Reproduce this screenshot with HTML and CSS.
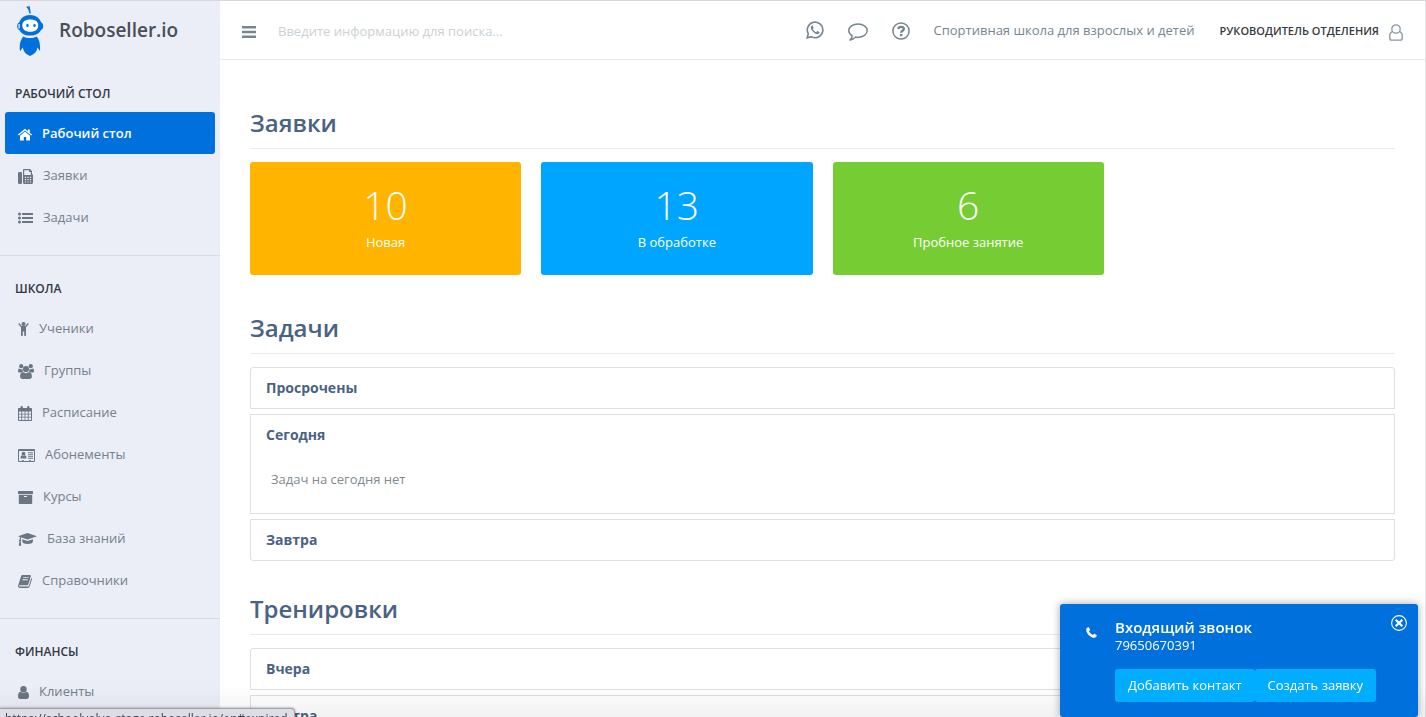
FILE: index.html
```html
<!DOCTYPE html>
<html lang="ru">
<head>
<meta charset="utf-8">
<title>Roboseller.io</title>
<link rel="stylesheet" href="styles.css">
</head>
<body>
<div class="app">
  <aside class="sidebar">
    <a class="brand" href="#">
      <svg class="brand-logo" width="28" height="50" viewBox="0 0 28 50" aria-hidden="true">
        <path fill="#0070dd" d="M9 .7 12.700.2 13.800 7.500 12.400 7.500C12 4.500 11 2.200 9 .7Z"/>
        <path fill="#0070dd" d="M13 9C7.500 9 3.600 12 2.200 16.500.8 16.700.2 18.300.2 20.200s.8 3.500 2.200 3.700C4 27 7.500 29.500 13 29.500S22.500 27 24 23.900c1.400-.2 2.200-1.800 2.200-3.700s-.6-3.500-2-3.700C22.800 12 18.500 9 13 9Z"/>
        <path fill="#fff" d="M13.300 13.500c-5.300 0-8 2.300-8 6s2.700 6.300 8 6.300 8-2.600 8-6.300-2.700-6-8-6ZM1.500 18h1.200v4.500H1.500z"/>
        <ellipse cx="10.500" cy="19.400" rx="1.200" ry="1.700" fill="#0070dd"/><ellipse cx="17.500" cy="19.400" rx="1.200" ry="1.700" fill="#0070dd"/>
        <path fill="#0070dd" d="M6.500 30.500c3 2 10 2 13 0 2.500 2.700 4 6.700 3.600 14.800L20.500 41.500c-.6 4-3.200 7-7.500 8.500-4.300-1.500-6.500-4.500-7.200-8.500L3 45.300C2 38.500 3.700 33 6.500 30.500Z"/>
      </svg>
      <span class="brand-name">Roboseller.io</span>
    </a>
    <nav class="menu">
      <section class="menu-group">
        <h3 class="menu-title">Рабочий стол</h3>
        <a class="menu-item active" href="#"><svg width="14" height="13" viewBox="0 0 14 13"><path d="M7 .8 0 6.600l.8 1L7 2.500l6.200 5.100.8-1-2.200-1.800V1.500H9.900v1.700Z"/><path d="M7 3.600 2 7.700V12.500h3.800V9h2.400v3.500H12V7.700Z"/></svg>Рабочий стол</a>
        <a class="menu-item" href="#"><svg width="15" height="15" viewBox="0 0 15 15"><rect y="3" width="4" height="12" rx="1.300"/><path fill-rule="evenodd" d="M5 1c0-.6.4-1 1-1h6l2 2v3c.6.200 1 .7 1 1.300V13.500c0 .8-.7 1.500-1.500 1.500H6.500C5.700 15 5 14.300 5 13.500ZM6.200 1.200V6h6.600V3h-1.700V1.200ZM6.900 7.700V8.900h1.200V7.700Zm2.500 0V8.900h1.200V7.700Zm2.500 0V8.900h1.200V7.700Zm-5 2.400v1.200h1.200V10.100Zm2.500 0v1.200h1.200V10.100Zm2.500 0v1.200h1.200V10.100Zm-5 2.300v1.200h1.200v-1.200Zm2.500 0v1.200h1.200v-1.200Zm2.500 0v1.200h1.200v-1.200Z"/></svg>Заявки</a>
        <a class="menu-item" href="#"><svg width="15" height="12" viewBox="0 0 15 12"><circle cx="1.500" cy="2" r="1.500"/><circle cx="1.500" cy="6" r="1.500"/><circle cx="1.500" cy="10" r="1.500"/><path d="M4 1h11v2H4zM4 5h11v2H4zM4 9h11v2H4z"/></svg>Задачи</a>
      </section>
      <section class="menu-group">
        <h3 class="menu-title">Школа</h3>
        <a class="menu-item" href="#"><svg width="11" height="14" viewBox="0 0 11 14"><circle cx="5.500" cy="2" r="2"/><path d="M1.200 1 3.800 4h3.400L9.800 1l1 1L8 5.300V13a.9.900 0 0 1-1.800.3V9.500H4.800v3.800A.9.900 0 0 1 3 13V5.300L.2 2Z"/></svg>Ученики</a>
        <a class="menu-item" href="#"><svg width="16" height="15" viewBox="0 0 16 15"><circle cx="3.200" cy="2.200" r="2.100"/><circle cx="12.800" cy="2.200" r="2.100"/><circle cx="8" cy="5" r="3.100"/><path d="M1 4.600c1.200.8 2.600.8 3.500.4 0 1.100.2 2 .7 2.700C4.300 7.700 3.600 8 3 8.600H1.500C.5 8.600 0 8 0 7.200 0 6 .2 4.900 1 4.600ZM15 4.600c-1.200.8-2.600.8-3.500.4 0 1.100-.2 2-.7 2.700.9 0 1.600.3 2.200.9h1.500c1 0 1.500-.6 1.500-1.400 0-1.200-.2-2.300-1-2.600ZM5 8.100c2 1.400 4 1.400 6 0 2.200 0 2.900 2.200 2.900 4.500 0 1.500-1 2.400-2.300 2.400H4.400c-1.300 0-2.300-.9-2.300-2.400C2.100 10.300 2.800 8.100 5 8.100Z"/></svg>Группы</a>
        <a class="menu-item" href="#"><svg width="14" height="15" viewBox="0 0 14 15"><path fill-rule="evenodd" d="M1 2h1.500V1.200a1.200 1.200 0 0 1 2.400 0V2h4.200v-.8a1.200 1.200 0 0 1 2.400 0V2H13c.6 0 1 .4 1 1v11c0 .6-.4 1-1 1H1c-.6 0-1-.4-1-1V3c0-.6.4-1 1-1Zm0 3.500v2.200h2.300V5.500Zm3.200 0v2.200h2.400V5.500Zm3.200 0v2.200h2.400V5.500Zm3.300 0v2.200H13V5.500ZM1 8.500v2.300h2.300V8.500Zm3.200 0v2.300h2.400V8.500Zm3.200 0v2.300h2.400V8.500Zm3.300 0v2.300H13V8.500ZM1 11.600V14h2.300v-2.400Zm3.200 0V14h2.400v-2.400Zm3.200 0V14h2.400v-2.400Zm3.300 0V14H13v-2.400Z"/></svg>Расписание</a>
        <a class="menu-item" href="#"><svg width="17" height="13" viewBox="0 0 17 13"><path fill-rule="evenodd" d="M1.200 0h14.600C16.500 0 17 .5 17 1.200v10.600c0 .7-.5 1.200-1.200 1.200H1.200C.5 13 0 12.500 0 11.800V1.200C0 .5.500 0 1.200 0ZM1 2v9.500c0 .3.200.5.500.5H4v-.8h2V12h5v-.8h2V12h2.500c.3 0 .5-.2.500-.5V2Z"/><circle cx="5.500" cy="4.700" r="1.900"/><path d="M4.200 6.200c.9.700 1.700.7 2.600 0C8 6.400 8.500 7.500 8.500 9.600h-6c0-2.100.5-3.200 1.700-3.400ZM10 3.200h5v1h-5zM10 5.200h5v1h-5zM10 7.200h5v1h-5zM10 9h5v.8h-5z"/></svg>Абонементы</a>
        <a class="menu-item" href="#"><svg width="15" height="13" viewBox="0 0 15 13"><path fill-rule="evenodd" d="M.5 0h14c.3 0 .5.200.5.500V3H0V.5C0 .2.200 0 .5 0ZM.8 3.800h13.400v8.500c0 .4-.3.700-.7.700h-12c-.4 0-.7-.3-.7-.7ZM6 5v1.100h3V5Z"/></svg>Курсы</a>
        <a class="menu-item" href="#"><svg width="19" height="13" viewBox="0 0 19 13"><path d="M9.500 0 0 3.200 2.300 4C1.700 4.700 1.500 5.500 1.500 6.700c-.8.500-.6 1.400-.1 1.700L.8 12.800h2.500L2.700 8.400c.6-.4.600-1.200 0-1.700 0-.9.200-1.700.9-2.300l5.900 2L19 3.200ZM4.300 6.200v2.500C4.600 10 7 11 9.700 11s5-1 5.200-2.300V6.200L9.500 8Z"/></svg>База знаний</a>
        <a class="menu-item" href="#"><svg width="14" height="13" viewBox="0 0 14 13"><path fill-rule="evenodd" d="M4.700 0h7.100c.8 0 1.200.6 1 1.300l-2.500 8c-.2.700-.6 1-1.300 1H1.800c-.6 0-.8.300-.6.800.1.400.5.500 1 .5h7.600c.5 0 .8-.2 1-.7l2.400-8c.7.400.9.900.7 1.600l-2.400 7.300c-.2.700-.9 1.200-1.700 1.200H2C.8 13-.3 11.800.1 10.500L3.100 1.200C3.300.5 3.900 0 4.700 0Zm.6 2.200-.3.900h5.300l.3-.9Zm-.7 2.100-.3.900h5.300l.3-.9Z"/></svg>Справочники</a>
      </section>
      <section class="menu-group">
        <h3 class="menu-title">Финансы</h3>
        <a class="menu-item" href="#"><svg width="11" height="13" viewBox="0 0 11 13"><circle cx="5.500" cy="3.200" r="3.200"/><path d="M2.500 5.800c2 1.500 4 1.500 6 0C10.300 6 11 7.800 11 10.500 11 12 10 13 8.800 13H2.200C1 13 0 12 0 10.500 0 7.800.7 6 2.500 5.800Z"/></svg>Клиенты</a>
      </section>
    </nav>
  </aside>

  <div class="main">
    <header class="topbar">
      <button class="icon-btn menu-toggle" type="button" aria-label="Меню"><svg width="14" height="12" viewBox="0 0 14 12"><path d="M0 0h14v2.400H0zM0 4.800h14v2.400H0zM0 9.600h14V12H0z"/></svg></button>
      <input class="search" type="text" aria-label="Поиск" placeholder="Введите информацию для поиска...">
      <div class="tools">
        <button class="icon-btn" type="button" aria-label="WhatsApp"><svg width="18" height="18" viewBox="0 0 18 18"><path fill="none" stroke="currentColor" stroke-width="1.600" d="M1.200 16.800 2.300 12.700A7.800 7.800 0 1 1 5.300 15.700Z"/><path d="M6.300 4.600c-.7 0-1.500.9-1.500 2 0 2.600 4 6.600 6.500 6.600 1.200 0 2.300-.9 2.300-1.700 0-.4-.1-.5-.4-.6l-1.700-.8c-.5-.2-.8.9-1.300 1.100-1.200-.2-3-2-3.300-3 .2-.4.8-.8.7-1.200L6.900 5c-.1-.3-.3-.4-.6-.4Z"/></svg></button>
        <button class="icon-btn chat" type="button" aria-label="Сообщения"><svg width="20" height="18" viewBox="0 0 20 18"><path fill="none" stroke="currentColor" stroke-width="1.500" stroke-linejoin="round" d="M10 .9C4.900.9.8 3.900.8 7.600c0 2.100 1.300 4 3.400 5.200C4 14.500 3.200 15.900 1.900 17c2.400-.3 4.200-1.300 5.500-2.900.8.200 1.700.3 2.600.3 5.100 0 9.200-3 9.200-6.800S15.100.9 10 .9Z"/></svg></button>
        <button class="icon-btn help" type="button" aria-label="Помощь"><svg width="18" height="18" viewBox="0 0 18 18"><circle cx="9" cy="9" r="8.100" fill="none" stroke="currentColor" stroke-width="1.500"/><path fill="none" stroke="currentColor" stroke-width="2.400" d="M6.200 7C6.500 5.500 7.500 4.900 9 4.900c1.600 0 2.800.8 2.800 2.100 0 1.700-2.600 1.700-2.600 3.800"/><path d="M8 12h2.400v2.300H8z"/></svg></button>
        <span class="school">Спортивная школа для взрослых и детей</span>
        <a class="user" href="#">Руководитель отделения<svg width="14" height="17" viewBox="0 0 14 17"><g fill="none" stroke="currentColor" stroke-width="1.300"><circle cx="7" cy="5" r="4.200"/><path d="M3.300 7.600C1.500 8.200.7 10.200.7 12.700v1.300c0 1.300.9 2.200 2.200 2.200h8.200c1.300 0 2.200-.9 2.200-2.200v-1.300c0-2.500-.8-4.500-2.600-5.100"/></g></svg></a>
      </div>
    </header>

    <main class="content">
      <section class="block">
        <h2 class="block-title">Заявки</h2>
        <div class="cards">
          <a class="card card-new" href="#"><strong>10</strong><span>Новая</span></a>
          <a class="card card-work" href="#"><strong>13</strong><span>В обработке</span></a>
          <a class="card card-trial" href="#"><strong>6</strong><span>Пробное занятие</span></a>
        </div>
      </section>
      <section class="block">
        <h2 class="block-title">Задачи</h2>
        <div class="panels">
          <div class="panel"><h4 class="panel-title">Просрочены</h4></div>
          <div class="panel"><h4 class="panel-title">Сегодня</h4><p class="panel-body">Задач на сегодня нет</p></div>
          <div class="panel"><h4 class="panel-title">Завтра</h4></div>
        </div>
      </section>
      <section class="block">
        <h2 class="block-title">Тренировки</h2>
        <div class="panels">
          <div class="panel"><h4 class="panel-title">Вчера</h4></div>
          <div class="panel"><h4 class="panel-title">Завтра</h4></div>
        </div>
      </section>
    </main>
  </div>
</div>

<div class="fade"></div>
<div class="link-hint">https://schoolvolvo-stage.roboseller.io/en#expired</div>

<div class="toast" role="alert">
  <svg class="toast-icon" width="11" height="11" viewBox="0 0 11 11"><path fill="currentColor" d="M2.500.2C1.300.4.2 1.400.2 2.700.3 6.500 4.600 10.800 8.300 10.800c1.300 0 2.300-1.100 2.500-2.300 0-.3 0-.4-.3-.5L8.300 6.800c-.5-.2-.9.800-1.400 1.200C5.400 7.600 3.400 5.600 3 4.100c.4-.5 1.300-.9 1.100-1.400L3 .5C2.900.2 2.800.2 2.500.2Z"/></svg>
  <div class="toast-text">
    <p class="toast-title">Входящий звонок</p>
    <p class="toast-phone">79650670391</p>
    <div class="toast-actions"><button class="btn" type="button">Добавить контакт</button><button class="btn" type="button">Создать заявку</button></div>
  </div>
  <button class="toast-close" type="button" aria-label="Закрыть"><svg width="16" height="16" viewBox="0 0 16 16"><circle cx="8" cy="8" r="7.400" fill="none" stroke="currentColor" stroke-width="1.100"/><path stroke="currentColor" stroke-width="2.200" d="m4.700 4.700 6.600 6.600M11.300 4.700l-6.600 6.600"/></svg></button>
</div>
</body>
</html>
```

FILE: styles.css
```css
* { box-sizing: border-box; }
body {
  margin: 0;
  font-family: "Open Sans", "Noto Sans", sans-serif;
  font-size: 13px;
  line-height: 20px;
  color: #818a91;
  background: #fff;
}
h2, h3, h4, p { margin: 0; }
a { color: inherit; text-decoration: none; }
button, input { font: inherit; color: inherit; border: 0; background: none; padding: 0; }
svg { display: block; flex: none; }

.app { display: flex; height: 100vh; overflow: hidden; border-top: 1px solid #d8d9e0; }

.sidebar { flex: none; width: 220px; background: #ebeef7; overflow: hidden; }
.brand { display: flex; align-items: center; gap: 14px; height: 59px; padding-left: 17px; font-size: 19px; font-weight: 600; color: #4a4f57; }
.brand-name { padding-bottom: 2px; }
.menu-group { padding: 26px 5px 17px; }
.menu-group + .menu-group { padding-top: 25px; border-top: 1px solid #d6dae3; }
.menu-title { margin: 0 0 10px 10px; font-size: 12px; line-height: 16px; font-weight: 600; text-transform: uppercase; color: #33383f; }
.menu-item { display: flex; align-items: center; gap: 10px; height: 42px; padding-left: 13px; border-radius: 3px; color: #76808b; }
.menu-item svg { margin-top: 2px; fill: #6c7683; }
.menu-item.active { background: #0070dd; color: #fff; font-weight: 600; }
.menu-item.active svg { fill: #fff; }

.main { flex: 1; min-width: 0; border-right: 1px solid #e4e4e8; }
.topbar { display: flex; align-items: center; height: 59px; padding: 0 22px; border-bottom: 1px solid #e8e8ea; color: #76868f; }
.icon-btn svg { fill: currentColor; }
.menu-toggle { padding-top: 4px; }
.search { flex: 1; min-width: 0; margin: 0 22px; padding-top: 2px; height: 34px; }
.search::placeholder { color: #cbd1d4; opacity: 1; }
.tools { display: flex; align-items: center; white-space: nowrap; }
.tools .icon-btn { margin-right: 24px; }
.tools .chat { padding-top: 4px; }
.tools .help { padding-top: 2px; }
.school { margin-right: 25px; }
.user { display: flex; align-items: center; gap: 10px; padding-top: 2px; font-size: 11px; font-weight: 600; text-transform: uppercase; color: #373a3f; }
.user svg { margin-top: 2px; color: #8a979e; }

.content { padding: 45px 30px 0; }
.block-title { margin-bottom: 13px; padding-bottom: 7px; border-bottom: 1px solid #ebebed; font-size: 24px; line-height: 36px; font-weight: 600; color: #4a6283; }
.cards { display: grid; grid-template-columns: repeat(4, 1fr); gap: 20px; margin-bottom: 35px; }
.card { display: flex; flex-direction: column; align-items: center; padding: 21px 10px 22px; border-radius: 3px; color: #fff; }
.card strong { font-size: 39px; line-height: 44px; font-weight: 300; }
.card span { padding-top: 4px; line-height: 22px; }
.card-new { background: #ffb400; }
.card-work { background: #00a5ff; }
.card-trial { background: #76cc33; }
.panels { display: grid; gap: 5px; margin-bottom: 30px; }
.panel { border: 1px solid #dedfe1; }
.panel:first-child { border-radius: 3px 3px 0 0; }
.panel:last-child { border-radius: 0 0 3px 3px; }
.panel-title { padding: 10px 15px; font-size: 14px; font-weight: 700; color: #4a6283; }
.panel-body { padding: 14px 20px 24px; }

.fade { position: fixed; left: 0; right: 0; bottom: 0; height: 32px; background: linear-gradient(rgba(0, 0, 0, 0), rgba(0, 0, 0, 0.05)); pointer-events: none; }
.link-hint { position: fixed; left: 0; bottom: -12px; padding: 1px 7px 0 5px; border: 1px solid #a2a3a8; border-left: 0; border-radius: 0 4px 0 0; background: #dcdde5; box-shadow: 0 0 3px rgba(0, 0, 0, 0.4); font-size: 12px; line-height: 18px; color: #3c3c50; }

.toast { position: fixed; right: 8px; bottom: 0; width: 358px; display: flex; align-items: flex-start; padding: 14px 11px 15px 26px; border-radius: 3px; background: #0070dd; color: #fff; box-shadow: 0 0 8px rgba(0, 0, 0, 0.35); }
.toast-icon { margin: 9px 18px 0 0; }
.toast-text { flex: 1; }
.toast-title { font-size: 15px; line-height: 19px; font-weight: 600; }
.toast-phone { font-size: 13px; line-height: 17px; }
.toast-actions { display: flex; margin-top: 15px; white-space: nowrap; }
.btn { height: 33px; padding: 0 13px 1px; border-radius: 3px; background: #00adff; color: #fff; }
.toast-close { position: absolute; top: 11px; right: 11px; }
```
